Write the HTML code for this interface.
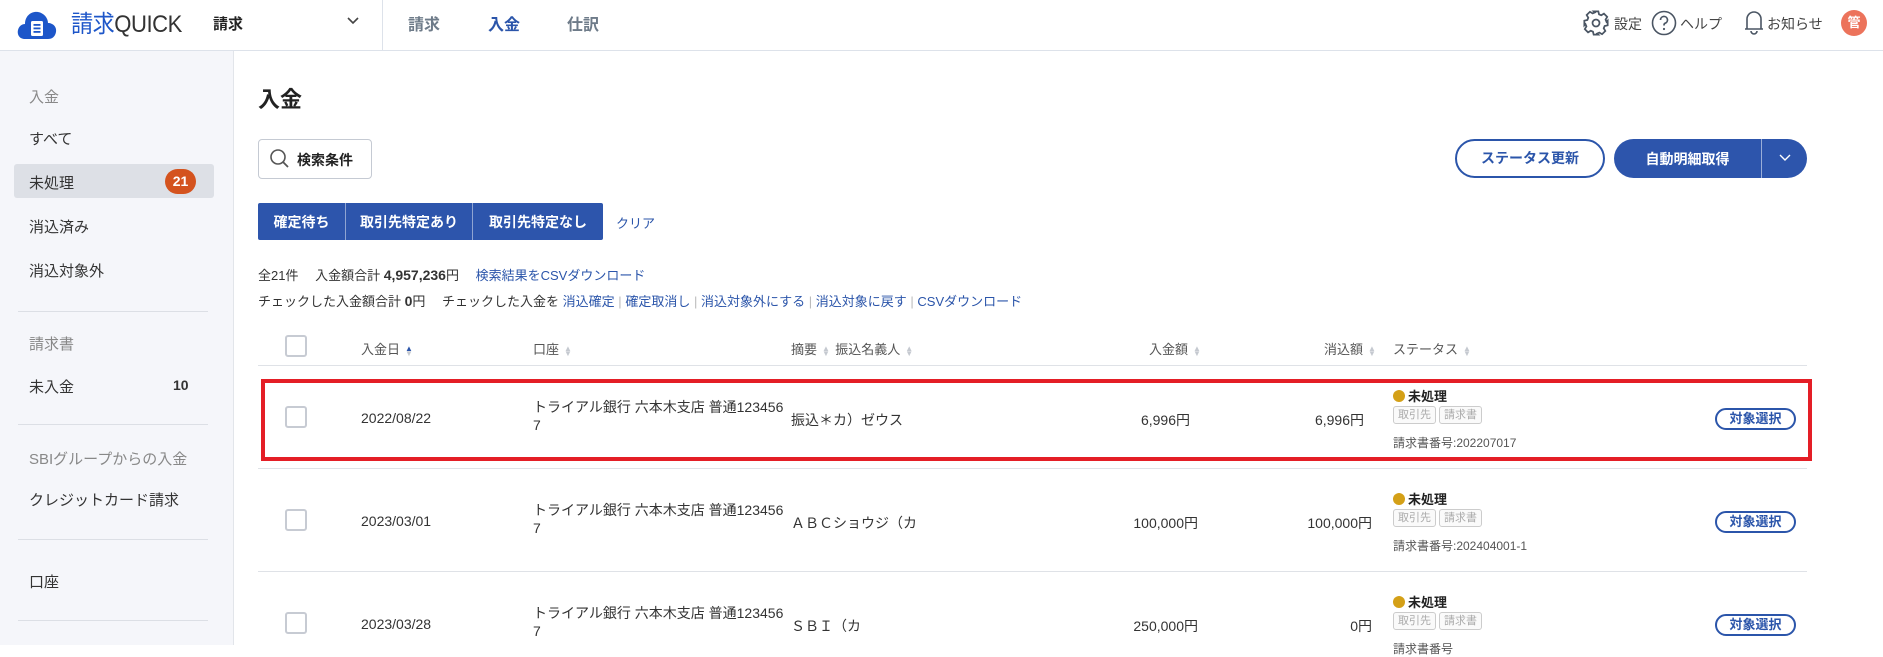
<!DOCTYPE html>
<html><head><meta charset="utf-8">
<style>
*{margin:0;padding:0;box-sizing:border-box}
body{width:1883px;height:645px;overflow:hidden;background:#fff;font-family:"Liberation Sans","Noto Sans CJK JP",sans-serif;color:#333;position:relative}
.a{position:absolute;white-space:nowrap}
.hdr{position:absolute;left:0;top:0;width:1883px;height:51px;border-bottom:1px solid #dde2ea;background:#fff}
.side{position:absolute;left:0;top:51px;width:234px;height:594px;background:#f5f6fa;border-right:1px solid #e2e5ea}
.sl{font-size:15px;color:#333}
.sg{font-size:15px;color:#888}
.div{position:absolute;left:18px;width:190px;height:1px;background:#dcdfe5}
.blue{color:#2b55aa}
.cb{position:absolute;width:22px;height:22px;border:2px solid #c7cbd3;border-radius:3px;background:#fff}
.hd{font-size:13px;color:#555}
.srt{display:inline-block;width:6px;margin-left:5px;color:#c5c9d0;font-size:8px;line-height:5px;vertical-align:middle}
.td{font-size:14px;color:#333}
.tag{display:inline-block;border:1px solid #ccc;border-radius:3px;font-size:11px;color:#aaa;padding:0 4px;height:18px;line-height:16px;margin-right:3px;background:#fafafa}
.btnS{position:absolute;width:81px;height:22px;border:2px solid #2b55aa;border-radius:11px;font-size:13px;font-weight:bold;color:#2b55aa;text-align:center;line-height:18px}
.dot{display:inline-block;width:12px;height:12px;border-radius:50%;background:#d4a017;vertical-align:-1px;margin-right:3px}
.rl{position:absolute;left:258px;width:1549px;height:1px;background:#dfe2e7}
</style></head><body>
<div class="hdr"></div>
<svg class="a" style="left:17px;top:10px" width="40" height="30" viewBox="0 0 40 30"><path d="M8 29 C2 29 0 24 1 20 C2 16 5 14 8 14 C8 6 14 1 21 2 C27 3 31 8 31 13 C36 13 40 17 39 22 C38 27 35 29 31 29 Z" fill="#1d56c9"/><rect x="14" y="11" width="12" height="15" rx="1.5" fill="#fff"/><rect x="16.5" y="14" width="7" height="1.8" fill="#1d56c9"/><rect x="16.5" y="17.5" width="7" height="1.8" fill="#1d56c9"/><rect x="16.5" y="21" width="7" height="1.8" fill="#1d56c9"/></svg>
<div class="a" style="left:71px;top:10px;font-size:24px;line-height:30px;letter-spacing:-0.5px;transform:scaleX(0.92);transform-origin:left"><span style="color:#1d56c9">請求</span><span style="color:#333">QUICK</span></div>
<div class="a" style="left:213px;top:13px;font-size:15px;font-weight:bold;color:#222">請求</div>
<svg class="a" style="left:346px;top:16px" width="14" height="10"><path d="M2 2 L7 7 L12 2" stroke="#444" stroke-width="1.6" fill="none"/></svg>
<div class="a" style="left:382px;top:0;width:1px;height:50px;background:#dde2ea"></div>
<div class="a" style="left:408px;top:11px;font-size:16px;font-weight:bold;color:#6e7b89">請求</div>
<div class="a" style="left:488px;top:11px;font-size:16px;font-weight:bold;color:#2b55aa">入金</div>
<div class="a" style="left:567px;top:11px;font-size:16px;font-weight:bold;color:#6e7b89">仕訳</div>
<svg class="a" style="left:1582px;top:9px" width="28" height="28" viewBox="0 0 24 24"><path d="M10 2h4l.6 2.6 1.9.8 2.3-1.4 2.8 2.8-1.4 2.3.8 1.9L22 10v4l-2.6.6-.8 1.9 1.4 2.3-2.8 2.8-2.3-1.4-1.9.8L14 22h-4l-.6-2.6-1.9-.8-2.3 1.4-2.8-2.8 1.4-2.3-.8-1.9L2 14v-4l2.6-.6.8-1.9L4 5.2 6.8 2.4l2.3 1.4 1.9-.8z" fill="none" stroke="#4a5563" stroke-width="1.5"/><circle cx="12" cy="12" r="3" fill="none" stroke="#4a5563" stroke-width="1.5"/></svg>
<div class="a" style="left:1614px;top:14px;font-size:14px;color:#444">設定</div>
<svg class="a" style="left:1651px;top:10px" width="26" height="26"><circle cx="13" cy="13" r="11.5" fill="none" stroke="#4a5563" stroke-width="1.6"/><path d="M9.5 10 a3.5 3.5 0 1 1 4.5 3.3 c-1 .4 -1 1 -1 2.2" fill="none" stroke="#4a5563" stroke-width="1.7"/><circle cx="13" cy="19" r="1.1" fill="#4a5563"/></svg>
<div class="a" style="left:1680px;top:14px;font-size:14px;color:#444">ヘルプ</div>
<svg class="a" style="left:1743px;top:9px" width="22" height="28"><path d="M4 20 V10 a7 7 0 0 1 14 0 V20 H2 H20" fill="none" stroke="#4a5563" stroke-width="1.6"/><path d="M8 22 a3 3 0 0 0 6 0" fill="none" stroke="#4a5563" stroke-width="1.6"/></svg>
<div class="a" style="left:1767px;top:14px;font-size:14px;color:#444">お知らせ</div>
<div class="a" style="left:1841px;top:10px;width:26px;height:26px;border-radius:50%;background:#ec735b;color:#fff;font-size:13px;font-weight:bold;text-align:center;line-height:26px">管</div>

<div class="side"></div>
<div class="a sg" style="left:29px;top:86px">入金</div>
<div class="a sl" style="left:29px;top:128px">すべて</div>
<div class="a" style="left:14px;top:164px;width:200px;height:34px;background:#dde0e6;border-radius:3px"></div>
<div class="a sl" style="left:29px;top:172px">未処理</div>
<div class="a" style="left:165px;top:169px;width:31px;height:25px;border-radius:13px;background:#d4531e;color:#fff;font-size:14px;font-weight:bold;text-align:center;line-height:25px">21</div>
<div class="a sl" style="left:29px;top:216px">消込済み</div>
<div class="a sl" style="left:29px;top:260px">消込対象外</div>
<div class="div" style="top:311px"></div>
<div class="a sg" style="left:29px;top:333px">請求書</div>
<div class="a sl" style="left:29px;top:376px">未入金</div>
<div class="a" style="left:173px;top:377px;font-size:14px;font-weight:bold">10</div>
<div class="div" style="top:424px"></div>
<div class="a sg" style="left:29px;top:448px">SBIグループからの入金</div>
<div class="a sl" style="left:29px;top:489px">クレジットカード請求</div>
<div class="div" style="top:539px"></div>
<div class="a sl" style="left:29px;top:571px">口座</div>
<div class="div" style="top:620px"></div>

<div class="a" style="left:258px;top:82px;font-size:22px;font-weight:bold;color:#222">入金</div>
<div class="a" style="left:258px;top:139px;width:114px;height:40px;border:1px solid #c5cad3;border-radius:4px"></div>
<svg class="a" style="left:269px;top:148px" width="22" height="22"><circle cx="9" cy="9" r="7" fill="none" stroke="#555" stroke-width="1.6"/><path d="M14 14 L19 19" stroke="#555" stroke-width="1.8"/></svg>
<div class="a" style="left:297px;top:150px;font-size:14px;font-weight:bold;color:#222">検索条件</div>
<div class="a" style="left:258px;top:203px;width:345px;height:37px;background:#2d55ac;border-radius:2px"></div>
<div class="a" style="left:345px;top:203px;width:1px;height:37px;background:#8fa4d2"></div>
<div class="a" style="left:472px;top:203px;width:1px;height:37px;background:#8fa4d2"></div>
<div class="a" style="left:258px;top:212px;width:87px;text-align:center;font-size:14px;font-weight:bold;color:#fff">確定待ち</div>
<div class="a" style="left:346px;top:212px;width:126px;text-align:center;font-size:14px;font-weight:bold;color:#fff">取引先特定あり</div>
<div class="a" style="left:473px;top:212px;width:130px;text-align:center;font-size:14px;font-weight:bold;color:#fff">取引先特定なし</div>
<div class="a blue" style="left:616px;top:213px;font-size:13px">クリア</div>
<div class="a" style="left:1455px;top:139px;width:150px;height:39px;border:2px solid #2b55aa;border-radius:20px;text-align:center;line-height:35px;font-size:14px;font-weight:bold;color:#2b55aa">ステータス更新</div>
<div class="a" style="left:1614px;top:139px;width:193px;height:39px;background:#2d55ac;border-radius:20px"></div>
<div class="a" style="left:1761px;top:139px;width:1px;height:39px;background:#9aaed8"></div>
<div class="a" style="left:1614px;top:149px;width:147px;text-align:center;font-size:14px;font-weight:bold;color:#fff">自動明細取得</div>
<svg class="a" style="left:1778px;top:153px" width="14" height="10"><path d="M2 2 L7 7 L12 2" stroke="#fff" stroke-width="1.4" fill="none"/></svg>

<div class="a" style="left:258px;top:265px;font-size:13px">全21件　 入金額合計 <b style="font-size:14px">4,957,236</b>円　 <span class="blue">検索結果をCSVダウンロード</span></div>
<div class="a" style="left:258px;top:291px;font-size:13px">チェックした入金額合計 <b style="font-size:14px">0</b>円　 チェックした入金を <span class="blue">消込確定</span> <span style="color:#bbb">|</span> <span class="blue">確定取消し</span> <span style="color:#bbb">|</span> <span class="blue">消込対象外にする</span> <span style="color:#bbb">|</span> <span class="blue">消込対象に戻す</span> <span style="color:#bbb">|</span> <span class="blue">CSVダウンロード</span></div>

<div class="cb" style="left:285px;top:335px"></div>
<div class="a hd" style="left:361px;top:339px">入金日<span class="srt" style="color:#2b55aa">▲<br><span style="color:#c5c9d0">▼</span></span></div>
<div class="a hd" style="left:533px;top:339px">口座<span class="srt">▲<br>▼</span></div>
<div class="a hd" style="left:791px;top:339px">摘要<span class="srt">▲<br>▼</span>&nbsp; 振込名義人<span class="srt">▲<br>▼</span></div>
<div class="a hd" style="left:1149px;top:339px">入金額<span class="srt">▲<br>▼</span></div>
<div class="a hd" style="left:1324px;top:339px">消込額<span class="srt">▲<br>▼</span></div>
<div class="a hd" style="left:1393px;top:339px">ステータス<span class="srt">▲<br>▼</span></div>
<div class="rl" style="top:365px"></div>
<div class="rl" style="top:468px"></div>
<div class="rl" style="top:571px"></div>

<div class="a" style="left:261px;top:379px;width:1551px;height:82px;border:4px solid #e41e26"></div>

<div class="cb" style="left:285px;top:406px"></div>
<div class="a td" style="left:361px;top:410px">2022/08/22</div>
<div class="a td" style="left:533px;top:398px;line-height:18px">トライアル銀行 六本木支店 普通123456<br>7</div>
<div class="a td" style="left:791px;top:410px">振込＊カ）ゼウス</div>
<div class="a td" style="left:1090px;top:410px;width:100px;text-align:right">6,996円</div>
<div class="a td" style="left:1264px;top:410px;width:100px;text-align:right">6,996円</div>
<div class="a" style="left:1393px;top:386px;font-size:13px;font-weight:bold;color:#222"><span class="dot"></span>未処理</div>
<div class="a" style="left:1393px;top:405px"><span class="tag">取引先</span><span class="tag">請求書</span></div>
<div class="a" style="left:1393px;top:434px;font-size:12px;color:#555">請求書番号:202207017</div>
<div class="btnS" style="left:1715px;top:408px">対象選択</div>

<div class="cb" style="left:285px;top:509px"></div>
<div class="a td" style="left:361px;top:513px">2023/03/01</div>
<div class="a td" style="left:533px;top:501px;line-height:18px">トライアル銀行 六本木支店 普通123456<br>7</div>
<div class="a td" style="left:791px;top:513px">ＡＢＣショウジ（カ</div>
<div class="a td" style="left:1098px;top:513px;width:100px;text-align:right">100,000円</div>
<div class="a td" style="left:1272px;top:513px;width:100px;text-align:right">100,000円</div>
<div class="a" style="left:1393px;top:489px;font-size:13px;font-weight:bold;color:#222"><span class="dot"></span>未処理</div>
<div class="a" style="left:1393px;top:508px"><span class="tag">取引先</span><span class="tag">請求書</span></div>
<div class="a" style="left:1393px;top:537px;font-size:12px;color:#555">請求書番号:202404001-1</div>
<div class="btnS" style="left:1715px;top:511px">対象選択</div>

<div class="cb" style="left:285px;top:612px"></div>
<div class="a td" style="left:361px;top:616px">2023/03/28</div>
<div class="a td" style="left:533px;top:604px;line-height:18px">トライアル銀行 六本木支店 普通123456<br>7</div>
<div class="a td" style="left:791px;top:616px">ＳＢＩ（カ</div>
<div class="a td" style="left:1098px;top:616px;width:100px;text-align:right">250,000円</div>
<div class="a td" style="left:1272px;top:616px;width:100px;text-align:right">0円</div>
<div class="a" style="left:1393px;top:592px;font-size:13px;font-weight:bold;color:#222"><span class="dot"></span>未処理</div>
<div class="a" style="left:1393px;top:611px"><span class="tag">取引先</span><span class="tag">請求書</span></div>
<div class="a" style="left:1393px;top:640px;font-size:12px;color:#555">請求書番号</div>
<div class="btnS" style="left:1715px;top:614px">対象選択</div>
</body></html>
